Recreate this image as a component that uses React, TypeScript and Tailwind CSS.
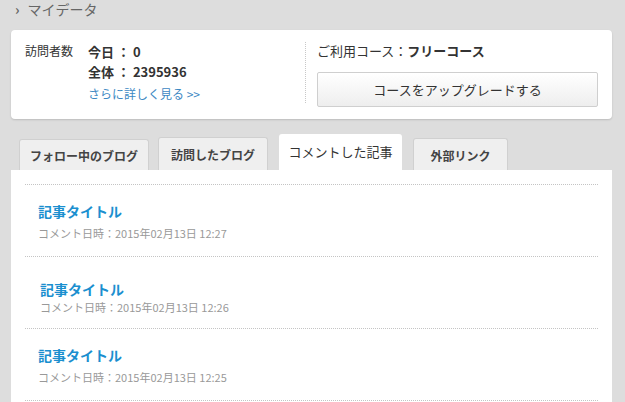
import React from 'react';

type Comment = { title: string; date: string; indent: string; gap: string };

const comments: Comment[] = [
  { title: '記事タイトル', date: '2015年02月13日 12:27', indent: 'pl-[13px] pt-[16px]', gap: 'mt-[4px]' },
  { title: '記事タイトル', date: '2015年02月13日 12:26', indent: 'pl-[15px] pt-[22px]', gap: 'mt-0' },
  { title: '記事タイトル', date: '2015年02月13日 12:25', indent: 'pl-[13px] pt-[16px]', gap: 'mt-[4px]' },
];

const tabs = [
  { label: 'フォロー中のブログ', cls: 'w-[130px] h-[31px] ml-[8px]' },
  { label: '訪問したブログ', cls: 'w-[110px] h-[33px] ml-[9px]' },
  { label: 'コメントした記事', cls: 'w-[123px] h-[36px] ml-[11px]', active: true },
  { label: '外部リンク', cls: 'w-[95px] h-[32px] ml-[11px]' },
];

export default function App() {
  return (
    <div className="w-[625px] h-[402px] overflow-hidden bg-[#dddddd] font-['Noto_Sans_CJK_JP','Liberation_Sans',sans-serif] text-[#333]">
      {/* page heading */}
      <div className="h-[19px] flex items-center pl-[15px] text-[#666]">
        <span className="text-[14px] font-bold leading-[19px] mr-[8px]">›</span>
        <span className="text-[14px] leading-[19px]">マイデータ</span>
      </div>

      {/* visitor / course card */}
      <div className="mt-[11px] ml-[11px] w-[601px] h-[89px] bg-white rounded-[4px] shadow-[0_1px_2px_rgba(0,0,0,0.15)] flex">
        <div className="w-[294px] flex pl-[14px] pt-[12px]">
          <div className="text-[12px] leading-[18px] w-[63px]">訪問者数</div>
          <div>
            <div className="text-[13px] font-bold leading-[20px]">今日 ： 0</div>
            <div className="text-[13px] font-bold leading-[20px]">全体 ： 2395936</div>
            <div className="text-[12px] leading-[24px] text-[#3d88c3]">さらに詳しく見る &gt;&gt;</div>
          </div>
        </div>
        <div className="mt-[12px] h-[61px] border-l border-dotted border-[#c8c8c8]" />
        <div className="pl-[11px] pt-[12px]">
          <div className="text-[13px] leading-[18px]">
            ご利用コース：<span className="font-bold">フリーコース</span>
          </div>
          <button className="mt-[12px] w-[281px] h-[35px] border border-[#cfcfcf] rounded-[2px] bg-gradient-to-b from-white to-[#eeeeee] text-[13px] text-[#333]">
            コースをアップグレードする
          </button>
        </div>
      </div>

      {/* tabs */}
      <div className="mt-[15px] h-[36px] flex items-end ml-[11px]">
        {tabs.map((t) =>
          t.active ? (
            <div key={t.label} className={`${t.cls} bg-white rounded-t-[3px] flex items-center justify-center text-[13px] text-[#333]`}>
              {t.label}
            </div>
          ) : (
            <div
              key={t.label}
              className={`${t.cls} bg-[#efefef] border border-b-0 border-[#d0d0d0] rounded-t-[3px] flex items-center justify-center pt-[2px] text-[12px] font-bold text-[#444]`}
            >
              {t.label}
            </div>
          )
        )}
      </div>

      {/* comment list panel */}
      <div className="ml-[11px] w-[601px] h-[260px] bg-white px-[14px] pt-[14px]">
        {comments.map((c) => (
          <div key={c.date} className="border-t border-dotted border-[#c4c4c4] h-[72px]">
            <div className={c.indent}>
              <div className="text-[14px] font-bold leading-[20px] text-[#1b8fcf]">{c.title}</div>
              <div className={`${c.gap} text-[11px] leading-[16px] text-[#999]`}>コメント日時：{c.date}</div>
            </div>
          </div>
        ))}
        <div className="border-t border-dotted border-[#c4c4c4]" />
      </div>
    </div>
  );
}
